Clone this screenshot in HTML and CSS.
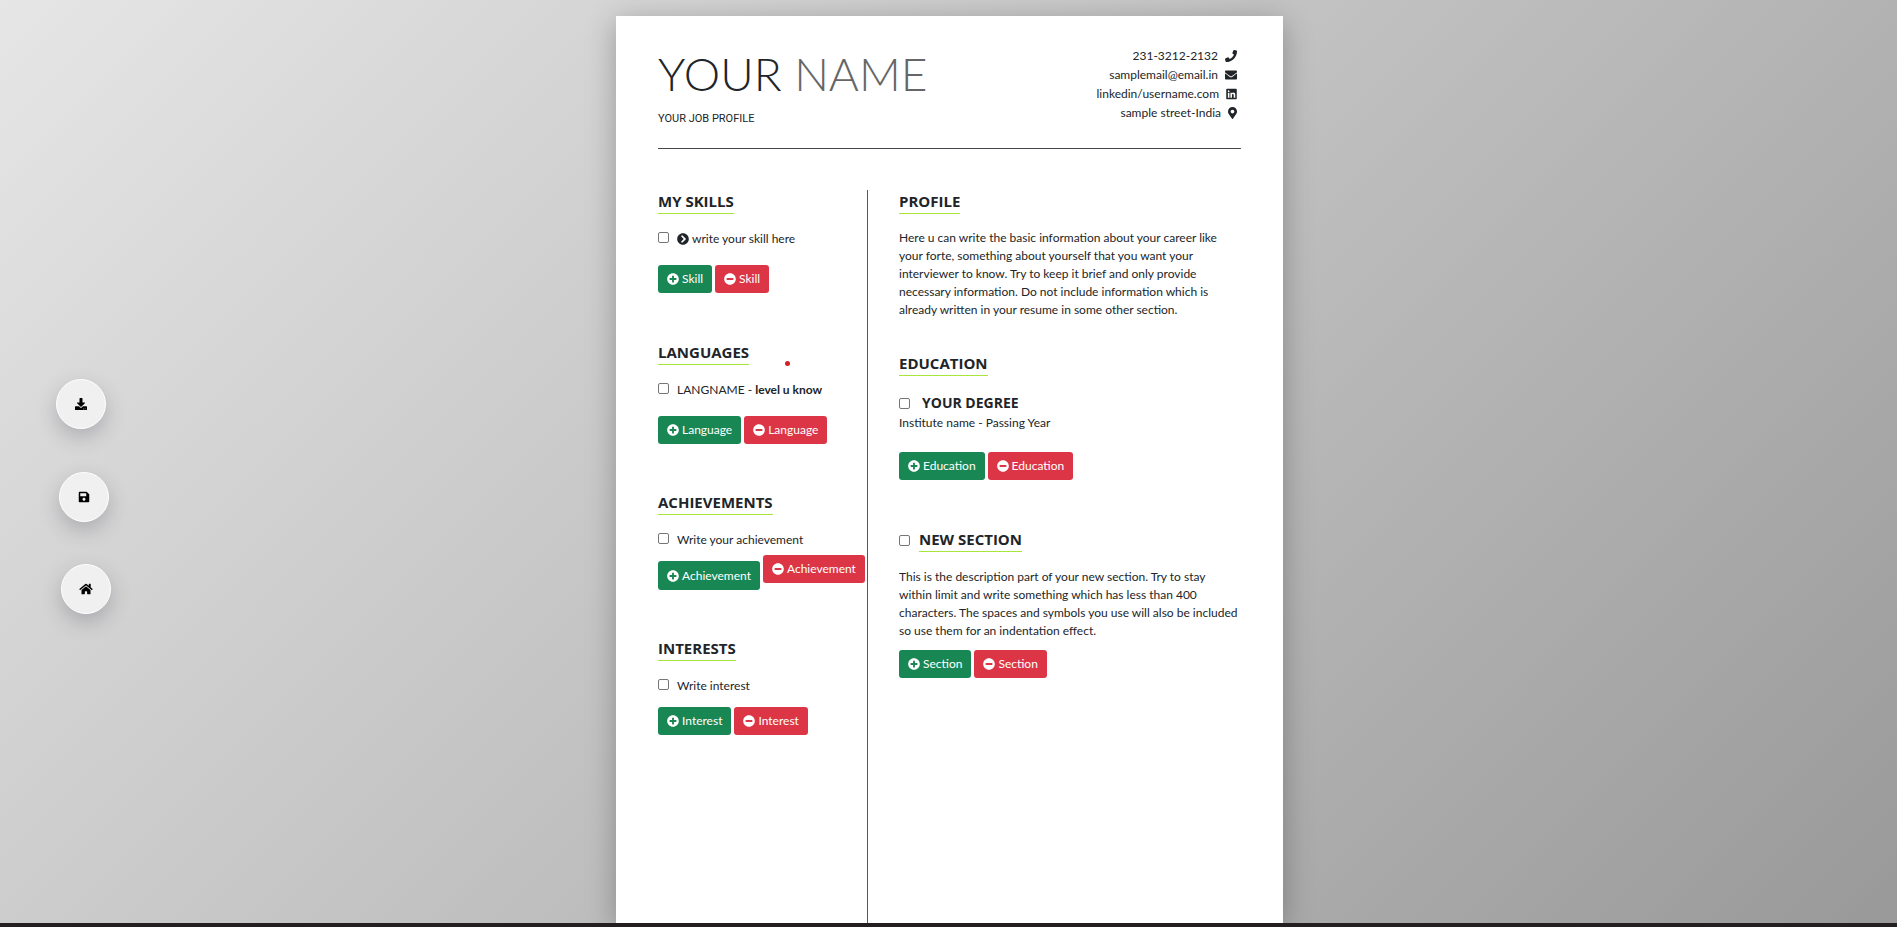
FILE: index.html
```html
<!DOCTYPE html>
<html lang="en">
<head>
<meta charset="utf-8">
<title>Resume Builder</title>
<link rel="stylesheet" href="styles.css">
</head>
<body>
<svg class="sprite" aria-hidden="true">
  <symbol id="phone" viewBox="0 0 512 512"><path d="M493.4 24.6l-104-24c-11.3-2.6-22.9 3.3-27.5 13.9l-48 112c-4.2 9.8-1.4 21.3 6.9 28l60.6 49.6c-36 76.7-98.9 140.5-177.2 177.2l-49.6-60.6c-6.8-8.3-18.2-11.1-28-6.9l-112 48C3.9 366.5-2 378.1.6 389.4l24 104C27.1 504.2 36.7 512 48 512c256.1 0 464-207.5 464-464 0-11.2-7.7-20.9-18.6-23.4z"/></symbol>
  <symbol id="envelope" viewBox="0 0 512 512"><path d="M502.3 190.8c3.9-3.1 9.7-.2 9.7 4.7V400c0 26.5-21.5 48-48 48H48c-26.5 0-48-21.5-48-48V195.6c0-5 5.7-7.8 9.7-4.7 22.4 17.4 52.1 39.5 154.1 113.6 21.1 15.4 56.7 47.8 92.2 47.6 35.7.3 72-32.8 92.3-47.6 102-74.1 131.6-96.3 154-113.7zM256 320c23.2.4 56.6-29.2 73.4-41.4 132.7-96.3 142.8-104.7 173.4-128.7 5.8-4.5 9.2-11.5 9.2-18.9v-19c0-26.5-21.5-48-48-48H48c-26.5 0-48 21.5-48 48v19c0 7.4 3.4 14.3 9.2 18.9 30.6 23.9 40.7 32.4 173.4 128.7 16.8 12.2 50.2 41.8 73.4 41.4z"/></symbol>
  <symbol id="linkedin" viewBox="0 0 448 512"><path d="M416 32H31.9C14.3 32 0 46.5 0 64.3v383.4C0 465.5 14.3 480 31.9 480H416c17.6 0 32-14.5 32-32.3V64.3c0-17.8-14.4-32.3-32-32.3zM135.4 416H69V202.2h66.5V416zm-33.2-243c-21.3 0-38.5-17.3-38.5-38.5S80.9 96 102.2 96c21.2 0 38.5 17.3 38.5 38.5 0 21.3-17.2 38.5-38.5 38.5zm282.1 243h-66.4V312c0-24.8-.5-56.7-34.5-56.7-34.6 0-39.9 27-39.9 54.9V416h-66.4V202.2h63.7v29.2h.9c8.9-16.8 30.6-34.5 62.9-34.5 67.2 0 79.7 44.3 79.7 101.9V416z"/></symbol>
  <symbol id="marker" viewBox="0 0 384 512"><path d="M172.268 501.67C26.97 291.031 0 269.413 0 192 0 85.961 85.961 0 192 0s192 85.961 192 192c0 77.413-26.97 99.031-172.268 309.67-9.535 13.774-29.93 13.773-39.464 0zM192 272c44.183 0 80-35.817 80-80s-35.817-80-80-80-80 35.817-80 80 35.817 80 80 80z"/></symbol>
  <symbol id="chevron" viewBox="0 0 512 512"><path d="M256 8c137 0 248 111 248 248S393 504 256 504 8 393 8 256 119 8 256 8zm113.9 231L234.4 103.5c-9.4-9.4-24.6-9.4-33.9 0l-17 17c-9.4 9.4-9.4 24.6 0 33.9L285.1 256 183.5 357.6c-9.4 9.4-9.4 24.6 0 33.9l17 17c9.4 9.4 24.6 9.4 33.9 0L369.9 273c9.4-9.4 9.4-24.6 0-34z"/></symbol>
  <symbol id="plus" viewBox="0 0 512 512"><path d="M256 8C119 8 8 119 8 256s111 248 248 248 248-111 248-248S393 8 256 8zm144 276c0 6.600-5.400 12-12 12h-92v92c0 6.600-5.400 12-12 12h-56c-6.600 0-12-5.400-12-12v-92h-92c-6.600 0-12-5.400-12-12v-56c0-6.600 5.400-12 12-12h92v-92c0-6.600 5.400-12 12-12h56c6.600 0 12 5.400 12 12v92h92c6.600 0 12 5.400 12 12v56z"/></symbol>
  <symbol id="minus" viewBox="0 0 512 512"><path d="M256 8C119 8 8 119 8 256s111 248 248 248 248-111 248-248S393 8 256 8zM124 296c-6.600 0-12-5.400-12-12v-56c0-6.600 5.400-12 12-12h264c6.600 0 12 5.400 12 12v56c0 6.600-5.400 12-12 12H124z"/></symbol>
  <symbol id="download" viewBox="0 0 512 512"><path d="M216 0h80c13.300 0 24 10.700 24 24v168h87.700c17.800 0 26.700 21.500 14.100 34.100L269.700 378.300c-7.500 7.500-19.800 7.500-27.300 0L90.100 226.100c-12.600-12.600-3.700-34.100 14.100-34.100H192V24c0-13.300 10.700-24 24-24zm296 376v112c0 13.300-10.700 24-24 24H24c-13.300 0-24-10.700-24-24V376c0-13.300 10.700-24 24-24h146.700l49 49c20.100 20.100 52.500 20.100 72.600 0l49-49H488c13.300 0 24 10.700 24 24zm-124 88c0-11-9-20-20-20s-20 9-20 20 9 20 20 20 20-9 20-20zm64 0c0-11-9-20-20-20s-20 9-20 20 9 20 20 20 20-9 20-20z"/></symbol>
  <symbol id="save" viewBox="0 0 448 512"><path d="M433.941 129.941l-83.882-83.882A48 48 0 0 0 316.118 32H48C21.490 32 0 53.490 0 80v352c0 26.510 21.490 48 48 48h352c26.510 0 48-21.490 48-48V163.882a48 48 0 0 0-14.059-33.941zM224 416c-35.346 0-64-28.654-64-64 0-35.346 28.654-64 64-64s64 28.654 64 64c0 35.346-28.654 64-64 64zm96-304.520V212c0 6.627-5.373 12-12 12H76c-6.627 0-12-5.373-12-12V108c0-6.627 5.373-12 12-12h228.520c3.183 0 6.235 1.264 8.485 3.515l3.480 3.480A11.996 11.996 0 0 1 320 111.480z"/></symbol>
  <symbol id="home" viewBox="0 0 576 512"><path d="M280.370 148.260L96 300.110V464a16 16 0 0 0 16 16l112.060-.290a16 16 0 0 0 15.920-16V368a16 16 0 0 1 16-16h64a16 16 0 0 1 16 16v95.640a16 16 0 0 0 16 16.050L464 480a16 16 0 0 0 16-16V300L295.670 148.260a12.190 12.190 0 0 0-15.300 0zM571.600 251.470L488 182.560V44.050a12 12 0 0 0-12-12h-56a12 12 0 0 0-12 12v72.610L318.470 43a48 48 0 0 0-61 0L4.340 251.470a12 12 0 0 0-1.600 16.900l25.500 31A12 12 0 0 0 45.150 301l235.220-193.740a12.190 12.190 0 0 1 15.300 0L530.900 301a12 12 0 0 0 16.900-1.600l25.500-31a12 12 0 0 0-1.700-16.930z"/></symbol>
</svg>

<nav class="tools" aria-label="Resume tools">
  <button class="round download" type="button" aria-label="Download"><svg class="icon"><use href="#download"/></svg></button>
  <button class="round save" type="button" aria-label="Save"><svg class="icon"><use href="#save"/></svg></button>
  <a class="round home" href="#" aria-label="Home"><svg class="icon"><use href="#home"/></svg></a>
</nav>

<main class="stage">
  <article class="paper">
    <span class="dot"></span>
    <header class="head">
      <div>
        <h1 class="name">YOUR <span class="last">NAME</span></h1>
        <p class="job">YOUR JOB PROFILE</p>
      </div>
      <ul class="contact">
        <li><span>231-3212-2132</span><svg class="icon"><use href="#phone"/></svg></li>
        <li><span>samplemail@email.in</span><svg class="icon"><use href="#envelope"/></svg></li>
        <li><span>linkedin/username.com</span><svg class="icon mid"><use href="#linkedin"/></svg></li>
        <li><span>sample street-India</span><svg class="icon slim"><use href="#marker"/></svg></li>
      </ul>
    </header>

    <div class="columns">
      <div class="side">
        <section class="skills">
          <h2 class="title">MY SKILLS</h2>
          <label class="item"><input class="check" type="checkbox"><span class="entry"><svg class="icon"><use href="#chevron"/></svg>write your skill here</span></label>
          <div class="actions">
            <button class="btn add" type="button"><svg class="icon"><use href="#plus"/></svg>Skill</button>
            <button class="btn remove" type="button"><svg class="icon"><use href="#minus"/></svg>Skill</button>
          </div>
        </section>
        <section class="languages">
          <h2 class="title">LANGUAGES</h2>
          <label class="item"><input class="check" type="checkbox"><span>LANGNAME - <b>level u know</b></span></label>
          <div class="actions">
            <button class="btn add" type="button"><svg class="icon"><use href="#plus"/></svg>Language</button>
            <button class="btn remove" type="button"><svg class="icon"><use href="#minus"/></svg>Language</button>
          </div>
        </section>
        <section class="achievements">
          <h2 class="title">ACHIEVEMENTS</h2>
          <label class="item"><input class="check" type="checkbox"><span>Write your achievement</span></label>
          <div class="actions">
            <button class="btn add" type="button"><svg class="icon"><use href="#plus"/></svg>Achievement</button>
            <button class="btn remove" type="button"><svg class="icon"><use href="#minus"/></svg>Achievement</button>
          </div>
        </section>
        <section class="interests">
          <h2 class="title">INTERESTS</h2>
          <label class="item"><input class="check" type="checkbox"><span>Write interest</span></label>
          <div class="actions">
            <button class="btn add" type="button"><svg class="icon"><use href="#plus"/></svg>Interest</button>
            <button class="btn remove" type="button"><svg class="icon"><use href="#minus"/></svg>Interest</button>
          </div>
        </section>
      </div>

      <div class="body">
        <section class="profile">
          <h2 class="title">PROFILE</h2>
          <p class="text">Here u can write the basic information about your career like<br>your forte, something about yourself that you want your<br>interviewer to know. Try to keep it brief and only provide<br>necessary information. Do not include information which is<br>already written in your resume in some other section.</p>
        </section>
        <section class="education">
          <h2 class="title">EDUCATION</h2>
          <label class="item degree"><input class="check" type="checkbox"><span>YOUR DEGREE</span></label>
          <p class="school">Institute name - Passing Year</p>
          <div class="actions">
            <button class="btn add" type="button"><svg class="icon"><use href="#plus"/></svg>Education</button>
            <button class="btn remove" type="button"><svg class="icon"><use href="#minus"/></svg>Education</button>
          </div>
        </section>
        <section class="extra">
          <label class="heading"><input class="check" type="checkbox"><span class="title">NEW SECTION</span></label>
          <p class="text">This is the description part of your new section. Try to stay<br>within limit and write something which has less than 400<br>characters. The spaces and symbols you use will also be included<br>so use them for an indentation effect.</p>
          <div class="actions">
            <button class="btn add" type="button"><svg class="icon"><use href="#plus"/></svg>Section</button>
            <button class="btn remove" type="button"><svg class="icon"><use href="#minus"/></svg>Section</button>
          </div>
        </section>
      </div>
    </div>
  </article>
</main>
<div class="edge"></div>
</body>
</html>
```
FILE: styles.css
```css
*, *::before, *::after { box-sizing: border-box; }

body {
  margin: 0;
  height: 100vh;
  display: flex;
  flex-direction: column;
  font-family: Lato, sans-serif;
  font-size: 12px;
  line-height: 18px;
  color: #212529;
  background: linear-gradient(135deg, #e6e6e6, #999999);
}

h1, h2, p, ul { margin: 0; padding: 0; }

.sprite { position: absolute; width: 0; height: 0; }

.icon { width: 12px; height: 12px; fill: currentColor; flex: none; }
.icon.mid { width: 11px; }
.icon.slim { width: 9px; }

/* Floating round tools */
.round {
  position: absolute;
  display: flex;
  align-items: center;
  justify-content: center;
  width: 50px;
  height: 50px;
  padding: 0;
  border: 1px solid #ffffff;
  border-radius: 50%;
  background: #f0f0f0;
  color: #000000;
  box-shadow: 0 8px 20px rgba(50, 50, 70, 0.25);
}
.download { left: 56px; top: 379px; }
.save { left: 59px; top: 472px; }
.home { left: 61px; top: 564px; }
.home .icon { width: 14px; }

/* Sheet */
.stage {
  flex: 1;
  min-height: 0;
  overflow: hidden;
  display: flex;
  justify-content: center;
  padding: 16px 0 0 2px;
}
.paper {
  position: relative;
  width: 100%;
  max-width: 667px;
  display: flex;
  flex-direction: column;
  padding: 30px 42px 0 42px;
  background: #ffffff;
  box-shadow: 0 6px 28px rgba(0, 0, 0, 0.28);
}
.dot {
  position: absolute;
  left: 169px;
  top: 345px;
  width: 5px;
  height: 5px;
  border-radius: 50%;
  background: #d42027;
}

.head {
  display: flex;
  justify-content: space-between;
  height: 103px;
  border-bottom: 1px solid #45484c;
}
.name {
  padding-top: 1px;
  font-size: 46px;
  font-weight: 300;
  line-height: 54px;
}
.last { color: #666666; }
.job {
  margin-top: 9px;
  font-family: Roboto, sans-serif;
  font-size: 11px;
}
.contact { padding: 0 4px 0 0; list-style: none; line-height: 19px; }
.contact li { display: flex; align-items: center; justify-content: flex-end; gap: 7px; }

.columns { flex: 1; display: flex; margin-top: 41px; }
.side { width: 210px; border-right: 1px solid #55585c; }
.body { flex: 1; min-width: 0; padding-left: 31px; }

.title {
  width: fit-content;
  font-family: "Open Sans", sans-serif;
  font-size: 15px;
  font-weight: 700;
  line-height: 22px;
  padding-bottom: 1px;
  border-bottom: 1px solid #a8e63c;
}
.item { display: flex; gap: 8px; }
.entry { display: flex; align-items: center; gap: 3px; }
.check {
  appearance: none;
  flex: none;
  width: 11px;
  height: 11px;
  margin: 2px 0 0;
  border: 1px solid #767676;
  border-radius: 2px;
  background: #ffffff;
}
.title + .item { margin-top: 16px; }
.title + .text { margin-top: 15px; }

.actions { display: flex; align-items: flex-start; gap: 3px; white-space: nowrap; }
.btn {
  display: flex;
  align-items: center;
  gap: 3px;
  height: 28px;
  padding: 0 9px;
  border: 0;
  border-radius: 3px;
  font: inherit;
  color: #ffffff;
}
.add { background: #198754; }
.remove { background: #dc3545; }

.skills .actions, .languages .actions { margin-top: 17px; }
.side section + section { margin-top: 48px; }
.side .achievements, .side .interests { margin-top: 47px; }
.achievements .actions { margin-top: 6px; }
.achievements .add { margin-top: 6px; height: 29px; }
.interests .actions { margin-top: 12px; }

.education { margin-top: 33px; }
.title + .degree {
  align-items: center;
  gap: 12px;
  margin-top: 17px;
  font-family: "Open Sans", sans-serif;
  font-size: 14px;
  font-weight: 700;
  line-height: 20px;
}
.degree .check, .heading .check { margin: 0; }
.school { margin-top: 1px; }
.education .actions { margin-top: 20px; }
.extra { margin-top: 48px; }
.heading { display: flex; align-items: center; gap: 9px; }
.heading + .text { margin-top: 16px; }
.extra .actions { margin-top: 10px; }

.edge { height: 4px; background: #231f20; }
```
